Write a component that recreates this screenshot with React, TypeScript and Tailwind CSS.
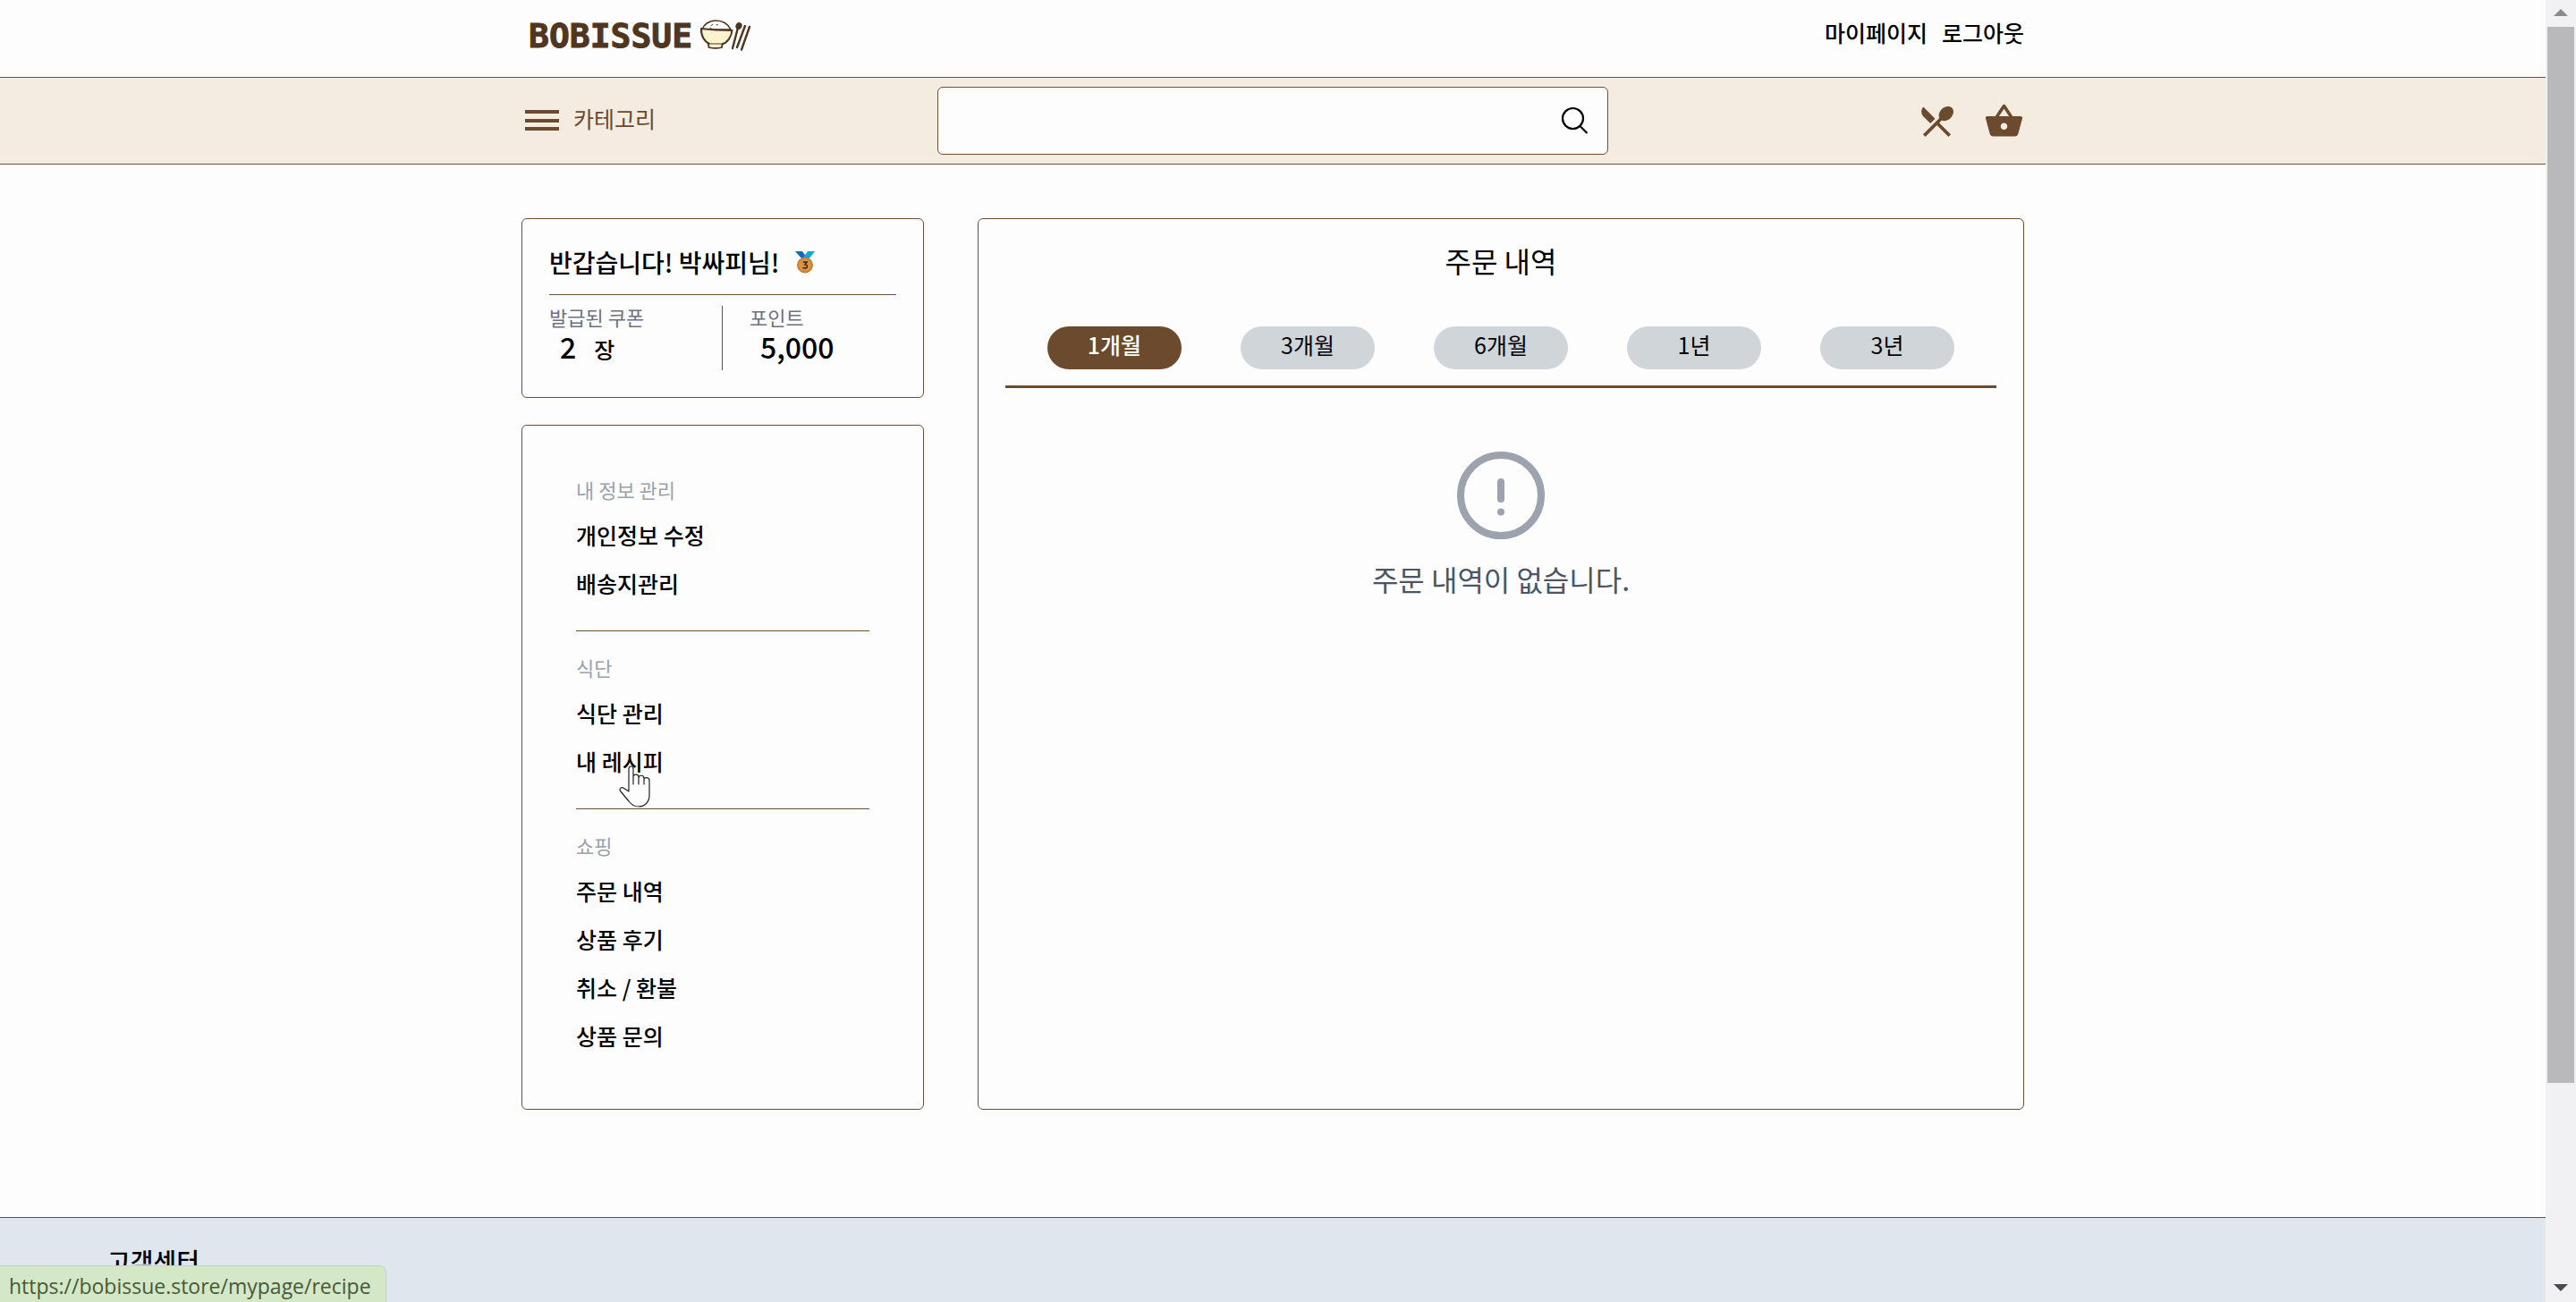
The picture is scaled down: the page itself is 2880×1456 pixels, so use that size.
import React from "react";
import { MdRestaurantMenu, MdShoppingBasket } from "react-icons/md";

type MenuGroup = { title: string; items: string[] };

const menuGroups: MenuGroup[] = [
  { title: "내 정보 관리", items: ["개인정보 수정", "배송지관리"] },
  { title: "식단", items: ["식단 관리", "내 레시피"] },
  { title: "쇼핑", items: ["주문 내역", "상품 후기", "취소 / 환불", "상품 문의"] },
];

const periods = ["1개월", "3개월", "6개월", "1년", "3년"];

function BowlLogo() {
  return (
    <svg width="58" height="38" viewBox="0 0 58 38" fill="none" stroke="#50351f" strokeLinecap="round" strokeLinejoin="round" aria-hidden="true">
      <path d="M3 12C5 6 11 2 18 2c8 0 14 4 17 10z" fill="#fff" strokeWidth="1.6" />
      <path d="M13 7.500l2-1M19 6.500l1.500.5M12 10l1 .3" strokeWidth="1" />
      <path d="M2 11c12 1.500 23 2 34.500 2C36 20 31 27 25 28.500H12C5.500 26 1.500 19 2 11z" fill="#fbf3cf" strokeWidth="2" />
      <path d="M10 28.500l.5 3.500c4 1 11 1 14.500 0l.5-3.500" fill="#fbf3cf" strokeWidth="1.800" />
      <ellipse cx="44" cy="8" rx="3" ry="3.500" transform="rotate(20 44 8)" fill="#50351f" strokeWidth="1" />
      <path d="M43 10L37 33" strokeWidth="2.400" />
      <path d="M51 8L42 32" strokeWidth="2.400" />
      <path d="M56 9L47 34.500" strokeWidth="2.400" />
    </svg>
  );
}

function HamburgerIcon() {
  return (
    <svg width="38" height="24" viewBox="0 0 38 24" fill="#6b4a2d" aria-hidden="true">
      <rect y="0" width="38" height="4" />
      <rect y="10" width="38" height="4" />
      <rect y="19" width="38" height="4" />
    </svg>
  );
}

function SearchIcon() {
  return (
    <svg width="32" height="32" viewBox="0 0 32 32" fill="none" stroke="#000" strokeWidth="2.200" aria-hidden="true">
      <circle cx="13.500" cy="13.500" r="11.500" />
      <path d="M21.500 22L29.500 30" />
    </svg>
  );
}

function MedalIcon() {
  return (
    <svg width="22" height="25" viewBox="0 0 22 25" role="img" aria-label="동메달">
      <path d="M0 0h8l5 7-5 2z" fill="#0f6cbd" />
      <path d="M14 0h8l-7 9-6-2z" fill="#12a5d8" />
      <circle cx="11" cy="15.500" r="9" fill="#c77d35" />
      <circle cx="11" cy="15.500" r="7" fill="#dd9346" />
      <path d="M8.800 12h4.400l-2.200 2.800c3.500 0 3 4.400-.2 4.200-1 0-1.600-.3-2.200-.9" fill="none" stroke="#3a2614" strokeWidth="1.500" />
    </svg>
  );
}

function EmptyIcon() {
  return (
    <svg width="98" height="98" viewBox="0 0 98 98" fill="none" stroke="#9ca3af" strokeWidth="8" strokeLinecap="round" aria-hidden="true">
      <circle cx="49" cy="49" r="45" />
      <path d="M49 34v19" />
      <circle cx="49" cy="67.500" r="4" fill="#9ca3af" stroke="none" />
    </svg>
  );
}

function HandCursor() {
  return (
    <svg className="pointer-events-none absolute top-8 left-12" width="36" height="47" viewBox="0 0 36 47" fill="#fdfdfd" stroke="#222" strokeWidth="1.200" strokeLinejoin="round" aria-hidden="true">
      <path d="M11 29V4c0-4 5-4 5 0v17-8c0-4 6-3.500 6 0v8-7c0-4 6-3.500 6 .5V21v-5c0-3.500 6-3 6 1v16c0 8-5 13-12 13-5 0-8-2-11-6L1.500 28.500C0 25.500 3 23.500 5.500 25.500z" />
    </svg>
  );
}

export default function App() {
  return (
    <div className="flex h-screen overflow-hidden bg-[#fdfdfd] font-['Noto_Sans_CJK_KR','Noto_Sans',sans-serif] text-[25px] leading-9 text-black">
      <div className="min-w-0 flex-1">
        <header className="border-b border-[#6b5034]">
          <div className="mx-auto flex max-w-[1680px] items-center justify-between pt-[18px] pb-6">
            <a href="#" className="flex items-center gap-2 pl-2">
              <span className="font-['DejaVu_Sans_Mono',monospace] text-[38px] leading-[42px] font-bold text-[#50351f] [-webkit-text-stroke:1px_#50351f]">BOBISSUE</span>
              <BowlLogo />
            </a>
            <nav className="flex gap-4 pb-2 font-medium">
              <a href="#">마이페이지</a>
              <a href="#">로그아웃</a>
            </nav>
          </div>
        </header>

        <div className="border-b border-[#6b5034] bg-[#f4ece1]">
          <div className="mx-auto grid max-w-[1680px] grid-cols-[1fr_750px_1fr] items-center py-[10px]">
            <button type="button" className="flex items-center gap-4 pl-1 text-[#6b4a2d]">
              <HamburgerIcon />
              <span className="pb-[6px]">카테고리</span>
            </button>
            <form className="flex items-center rounded-md border border-[#6b5034] bg-[#fdfdfd] pr-5" onSubmit={(e) => e.preventDefault()}>
              <input type="text" aria-label="검색" className="h-[74px] min-w-0 flex-1 bg-transparent px-4 outline-none" />
              <button type="submit" aria-label="검색하기"><SearchIcon /></button>
            </form>
            <div className="flex justify-end gap-[30px] text-[#6b4a2d]">
              <a href="#" aria-label="식단"><MdRestaurantMenu size={45} /></a>
              <a href="#" aria-label="장바구니"><MdShoppingBasket size={45} /></a>
            </div>
          </div>
        </div>

        <main className="mx-auto flex max-w-[1680px] gap-[60px] pt-[60px] pb-[120px]">
          <aside className="flex w-[450px] flex-col gap-[30px]">
            <section className="rounded-md border border-[#6b5034] p-[30px]">
              <h2 className="flex items-center gap-[18px] border-b border-[#6b5034] pb-[18px] text-[28px] font-medium">
                반갑습니다! 박싸피님! <MedalIcon />
              </h2>
              <div className="mt-3 grid grid-cols-2">
                <div className="border-r border-[#6b5034] pb-[6px]">
                  <p className="text-[22px] leading-6 text-gray-500">발급된 쿠폰</p>
                  <p className="flex items-baseline gap-5 pl-3 leading-[42px] font-medium">
                    <span className="text-[32px]">2</span>
                    <span className="leading-none">장</span>
                  </p>
                </div>
                <div className="pl-[30px]">
                  <p className="text-[22px] leading-6 text-gray-500">포인트</p>
                  <p className="pl-3 text-[32px] leading-[42px] font-medium">5,000</p>
                </div>
              </div>
            </section>

            <nav className="rounded-md border border-[#6b5034] px-[60px] pt-[53px] pb-[55px]">
              {menuGroups.map((group, i) => (
                <section key={group.title} className={i < menuGroups.length - 1 ? "mb-[22px] border-b border-[#6b5034] pb-[26px]" : ""}>
                  <h3 className="pb-[6px] text-[22px] text-gray-400">{group.title}</h3>
                  <ul>
                    {group.items.map((item) => (
                      <li key={item} className="relative py-[9px] font-medium">
                        <a href="#">{item}</a>
                        {item === "내 레시피" && <HandCursor />}
                      </li>
                    ))}
                  </ul>
                </section>
              ))}
            </nav>
          </aside>

          <section className="flex-1 rounded-md border border-[#6b5034] px-[30px] pt-7">
            <h1 className="text-center text-[32px]">주문 내역</h1>
            <div className="mt-14 flex justify-around border-b-[3px] border-[#6b4a2d] px-[14px] pb-[18px]">
              {periods.map((p, i) => (
                <button
                  key={p}
                  type="button"
                  className={
                    i === 0
                      ? "w-[150px] rounded-full bg-[#6b4a2d] pt-[2px] pb-[10px] font-medium text-white"
                      : "w-[150px] rounded-full bg-[#d0d5da] pt-[2px] pb-[10px]"
                  }
                >
                  {p}
                </button>
              ))}
            </div>
            <div className="flex flex-col items-center gap-[26px] pt-[71px]">
              <EmptyIcon />
              <p className="text-[32px] text-gray-600">주문 내역이 없습니다.</p>
            </div>
          </section>
        </main>

        <footer className="border-t border-[#6b5034] bg-[#dfe6ee] px-[120px] pt-[30px] pb-[60px]">
          <h2 className="text-[28px] font-medium">고객센터</h2>
        </footer>
      </div>

      <div className="flex w-[34px] flex-col items-center bg-[#f1f1f3]" aria-hidden="true">
        <svg width="34" height="30" viewBox="0 0 34 30"><path d="M9 18l8-8 8 8z" fill="#8b8b8b" /></svg>
        <div className="h-[1181px] w-[30px] bg-[#b9b9bb]" />
        <svg className="mt-auto" width="34" height="30" viewBox="0 0 34 30"><path d="M9 10l8 8 8-8z" fill="#4a4a50" /></svg>
      </div>

      <div className="absolute bottom-0 left-0 rounded-tr-lg border-t border-r border-[#c5d6c8] bg-[#d4e7c7] pt-1 pr-4 pl-[10px] font-['Open_Sans','Noto_Sans',sans-serif] text-[23px] text-[#46593a]">
        https://bobissue.store/mypage/recipe
      </div>
    </div>
  );
}
